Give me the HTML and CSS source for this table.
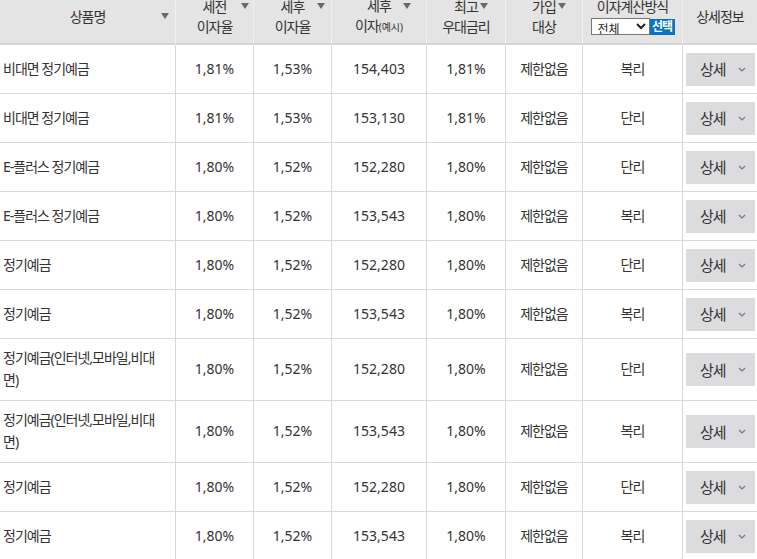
FILE: index.html
```html
<!DOCTYPE html>
<html lang="ko">
<head>
<meta charset="utf-8">
<title>예금 금리 비교</title>
<link rel="stylesheet" href="styles.css">
</head>
<body>
<table class="rate-table">
  <colgroup>
    <col class="w-name"><col class="w-rate"><col class="w-rate"><col class="w-int"><col class="w-max"><col class="w-join"><col class="w-calc"><col class="w-detail">
  </colgroup>
  <thead>
    <tr>
      <th class="ko">상품명<svg class="sort sort-name" viewBox="0 0 8 6"><polygon points="0,0 8,0 4,6"/></svg></th>
      <th class="ko">세전<br>이자율<svg class="sort sort-pre" viewBox="0 0 8 6"><polygon points="0,0 8,0 4,6"/></svg></th>
      <th class="ko">세후<br>이자율<svg class="sort sort-post" viewBox="0 0 8 6"><polygon points="0,0 8,0 4,6"/></svg></th>
      <th class="ko">세후<br>이자<span class="small">(예시)</span><svg class="sort sort-int" viewBox="0 0 8 6"><polygon points="0,0 8,0 4,6"/></svg></th>
      <th class="ko">최고<br>우대금리<svg class="sort sort-max" viewBox="0 0 8 6"><polygon points="0,0 8,0 4,6"/></svg></th>
      <th class="ko">가입<br>대상<svg class="sort sort-join" viewBox="0 0 8 6"><polygon points="0,0 8,0 4,6"/></svg></th>
      <th class="ko">
        <div class="calc-title">이자계산방식</div>
        <div class="filter"><select class="calc-select"><option>전체</option><option>단리</option><option>복리</option></select><span class="pick-btn">선택</span></div>
      </th>
      <th class="ko">상세정보</th>
    </tr>
  </thead>
  <tbody>
    <tr><td class="name ko">비대면 정기예금</td><td>1,81%</td><td>1,53%</td><td>154,403</td><td>1,81%</td><td class="ko">제한없음</td><td class="ko">복리</td><td class="detail"><span class="detail-btn ko">상세<svg class="chev" viewBox="0 0 8 5"><polyline points="1,1 4,4 7,1"/></svg></span></td></tr>
    <tr><td class="name ko">비대면 정기예금</td><td>1,81%</td><td>1,53%</td><td>153,130</td><td>1,81%</td><td class="ko">제한없음</td><td class="ko">단리</td><td class="detail"><span class="detail-btn ko">상세<svg class="chev" viewBox="0 0 8 5"><polyline points="1,1 4,4 7,1"/></svg></span></td></tr>
    <tr><td class="name ko">E-플러스 정기예금</td><td>1,80%</td><td>1,52%</td><td>152,280</td><td>1,80%</td><td class="ko">제한없음</td><td class="ko">단리</td><td class="detail"><span class="detail-btn ko">상세<svg class="chev" viewBox="0 0 8 5"><polyline points="1,1 4,4 7,1"/></svg></span></td></tr>
    <tr><td class="name ko">E-플러스 정기예금</td><td>1,80%</td><td>1,52%</td><td>153,543</td><td>1,80%</td><td class="ko">제한없음</td><td class="ko">복리</td><td class="detail"><span class="detail-btn ko">상세<svg class="chev" viewBox="0 0 8 5"><polyline points="1,1 4,4 7,1"/></svg></span></td></tr>
    <tr><td class="name ko">정기예금</td><td>1,80%</td><td>1,52%</td><td>152,280</td><td>1,80%</td><td class="ko">제한없음</td><td class="ko">단리</td><td class="detail"><span class="detail-btn ko">상세<svg class="chev" viewBox="0 0 8 5"><polyline points="1,1 4,4 7,1"/></svg></span></td></tr>
    <tr><td class="name ko">정기예금</td><td>1,80%</td><td>1,52%</td><td>153,543</td><td>1,80%</td><td class="ko">제한없음</td><td class="ko">복리</td><td class="detail"><span class="detail-btn ko">상세<svg class="chev" viewBox="0 0 8 5"><polyline points="1,1 4,4 7,1"/></svg></span></td></tr>
    <tr><td class="name ko">정기예금(인터넷,모바일,비대면)</td><td>1,80%</td><td>1,52%</td><td>152,280</td><td>1,80%</td><td class="ko">제한없음</td><td class="ko">단리</td><td class="detail"><span class="detail-btn ko">상세<svg class="chev" viewBox="0 0 8 5"><polyline points="1,1 4,4 7,1"/></svg></span></td></tr>
    <tr><td class="name ko">정기예금(인터넷,모바일,비대면)</td><td>1,80%</td><td>1,52%</td><td>153,543</td><td>1,80%</td><td class="ko">제한없음</td><td class="ko">복리</td><td class="detail"><span class="detail-btn ko">상세<svg class="chev" viewBox="0 0 8 5"><polyline points="1,1 4,4 7,1"/></svg></span></td></tr>
    <tr><td class="name ko">정기예금</td><td>1,80%</td><td>1,52%</td><td>152,280</td><td>1,80%</td><td class="ko">제한없음</td><td class="ko">단리</td><td class="detail"><span class="detail-btn ko">상세<svg class="chev" viewBox="0 0 8 5"><polyline points="1,1 4,4 7,1"/></svg></span></td></tr>
    <tr><td class="name ko">정기예금</td><td>1,80%</td><td>1,52%</td><td>153,543</td><td>1,80%</td><td class="ko">제한없음</td><td class="ko">복리</td><td class="detail"><span class="detail-btn ko">상세<svg class="chev" viewBox="0 0 8 5"><polyline points="1,1 4,4 7,1"/></svg></span></td></tr>
  </tbody>
</table>
</body>
</html>
```
FILE: styles.css
```css
html, body {
  margin: 0;
  padding: 0;
  overflow: hidden;
  background: #fff;
}
body {
  font-family: "Noto Sans", "Noto Sans CJK KR", sans-serif;
  font-size: 14px;
  color: #333;
}
.rate-table {
  margin-top: -10px;
  width: 758px;
  table-layout: fixed;
  border-collapse: separate;
  border-spacing: 0;
}
.w-name { width: 176px; }
.w-rate { width: 78px; }
.w-int { width: 95px; }
.w-max { width: 79px; }
.w-join { width: 77px; }
.w-calc { width: 100px; }
.w-detail { width: 75px; }

.ko { letter-spacing: -1px; }

.rate-table th {
  position: relative;
  background: #e4e4e4;
  border-right: 1px solid #f0f0f0;
  border-bottom: 2px solid #d3d3d3;
  padding: 6px 0;
  height: 40px;
  line-height: 20px;
  font-weight: normal;
  font-size: 14px;
  color: #333;
  text-align: center;
  vertical-align: middle;
}
.small { font-size: 10px; letter-spacing: 0; }
.sort {
  position: absolute;
  width: 8px;
  height: 6px;
  top: 13px;
  fill: #6a6a6a;
}
.sort-name { top: 23px; right: 6px; }
.sort-pre { right: 4px; }
.sort-post { right: 6px; }
.sort-int { right: 15px; }
.sort-max { right: 17px; }
.sort-join { right: 16px; }

.calc-title {
  height: 20px;
}
.filter {
  display: flex;
  justify-content: center;
  align-items: center;
  height: 20px;
}
.calc-select {
  width: 59px;
  height: 17px;
  margin: 0;
  font-family: "Noto Sans CJK KR", sans-serif;
  font-size: 12px;
  padding: 0 0 0 2px;
  border: 1px solid #767676;
  border-radius: 0;
  background: #fff;
  color: #222;
  letter-spacing: 0;
}
.pick-btn {
  display: block;
  width: 25px;
  height: 16px;
  line-height: 16px;
  background: #0b74bf;
  color: #fff;
  font-size: 12px;
  font-weight: bold;
  letter-spacing: -1px;
  text-align: center;
}

.rate-table td {
  border-right: 1px solid #d8d8d8;
  border-bottom: 1px solid #d8d8d8;
  padding: 8px 0 9px;
  height: 31px;
  line-height: 22px;
  text-align: center;
  vertical-align: middle;
  color: #333;
}
.rate-table td.name {
  text-align: left;
  padding-left: 3px;
  padding-right: 12px;
}
.rate-table td.detail {
  padding: 0 2px 0 3px;
}
.detail-btn {
  display: flex;
  align-items: center;
  width: 69px;
  height: 33px;
  box-sizing: border-box;
  padding: 0 9px 0 14px;
  background: #dcdcde;
  font-size: 15px;
  color: #333;
}
.chev {
  margin-left: auto;
  width: 8px;
  height: 5px;
  fill: none;
  stroke: #777;
  stroke-width: 1.2;
}
```
